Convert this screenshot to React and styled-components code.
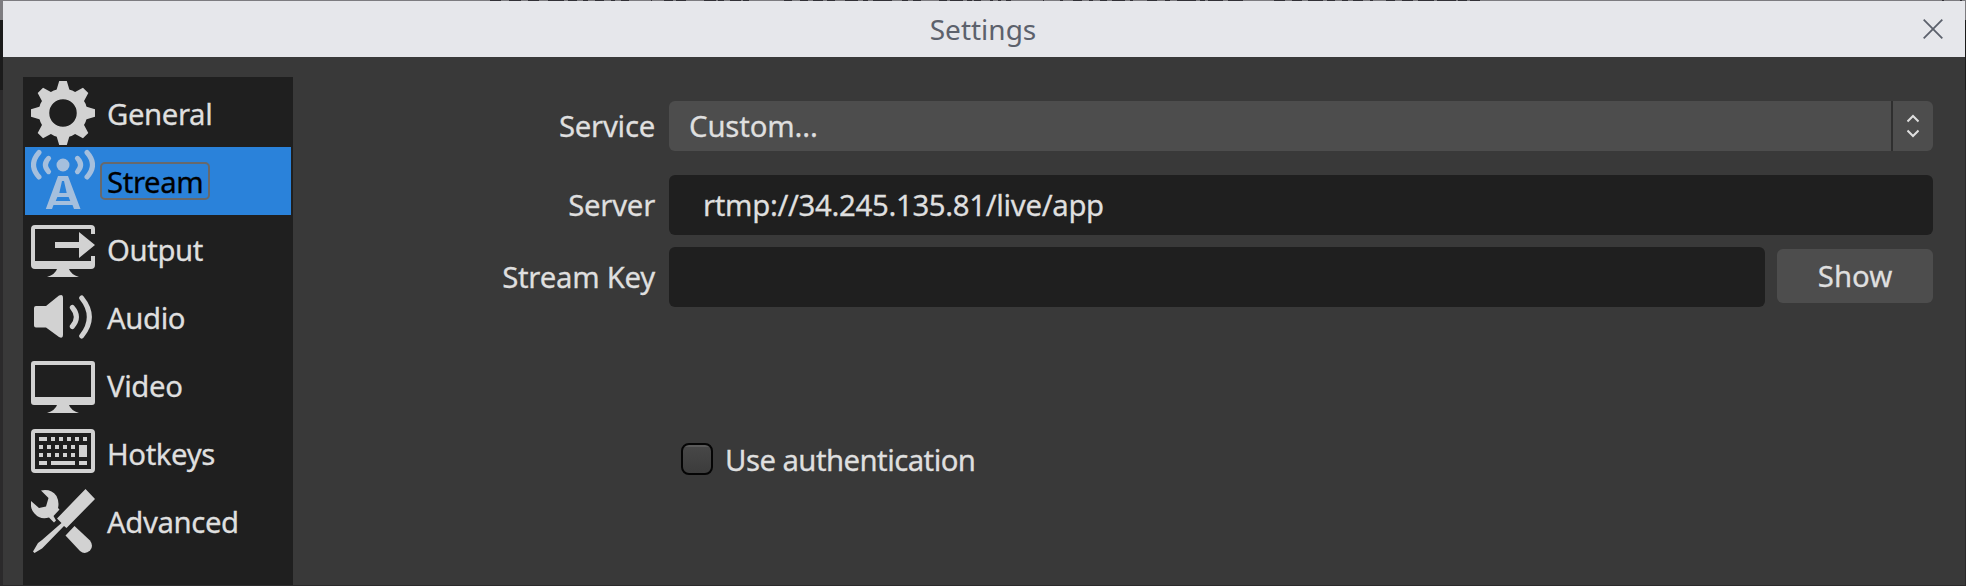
import React from "react";
import styled, { createGlobalStyle } from "styled-components";

const Global = createGlobalStyle`
  * { box-sizing: border-box; }
  body { margin: 0; background: #2b2b2c; overflow: hidden; }
`;

// Start and end of each dark run of the window text that shows above the dialog.
const runs = [
  [490, 501], [509, 521], [528, 539], [548, 564], [568, 577], [583, 588], [595, 604],
  [611, 615], [621, 629], [651, 652], [664, 673], [676, 686], [704, 716], [718, 724],
  [730, 741], [743, 749], [784, 792], [800, 808], [813, 823], [827, 835], [845, 858],
  [863, 868], [873, 892], [902, 908], [913, 921], [939, 947], [950, 963], [967, 972],
  [974, 981], [990, 993], [998, 1001], [1006, 1011], [1043, 1044], [1060, 1063],
  [1073, 1082], [1089, 1093], [1100, 1107], [1112, 1125], [1130, 1133], [1147, 1157],
  [1165, 1170], [1177, 1196], [1200, 1205], [1208, 1223], [1228, 1243], [1274, 1285],
  [1292, 1302], [1308, 1323], [1327, 1335], [1342, 1348], [1353, 1363], [1370, 1373],
  [1386, 1395], [1402, 1413], [1418, 1434], [1437, 1456], [1458, 1467], [1470, 1480],
  [1942, 1944], [1960, 1962],
];
const runStops = runs
  .map(([a, b]) => `#7d7c80 ${a}px, #313036 ${a}px, #313036 ${b}px, #7d7c80 ${b}px`)
  .join(", ");

const Desktop = styled.div`
  width: 1966px;
  height: 586px;
  padding: 1px 1px 1px 3px;
  background:
    linear-gradient(90deg, ${runStops}) 0 0 / 100% 1px no-repeat,
    linear-gradient(#7d7c80, #7d7c80) 0 1px / 100% 19px no-repeat,
    linear-gradient(#1b1b1b, #1b1b1b) 0 20px / 100% 70px no-repeat,
    #2b2a2b;
  font: 29.33px/40px "Noto Sans", sans-serif;
  letter-spacing: -0.15px;
  -webkit-text-stroke: 0.3px currentColor;
  color: #dfdfdf;
`;

const Dialog = styled.div`
  height: 584px;
  display: flex;
  flex-direction: column;
  background: #393939;
`;

const TitleBar = styled.header`
  height: 56px;
  flex: none;
  display: grid;
  grid-template-columns: 62px 1fr 64px;
  align-items: center;
  background: #e6e7eb;
  color: #5c616c;
`;

const Title = styled.h1`
  grid-column: 2;
  margin: 0;
  font-size: 28px;
  font-weight: 400;
  line-height: 40px;
  letter-spacing: 0;
  text-align: center;
  -webkit-text-stroke: 0;
`;

const CloseButton = styled.button`
  border: 0;
  padding: 0;
  background: none;
  display: flex;
  justify-content: center;
`;

const Body = styled.div`
  flex: 1;
  min-height: 0;
  display: flex;
  padding: 20px 32px 0 20px;
`;

const Sidebar = styled.nav`
  width: 270px;
  padding: 2px;
  background: #1f1f1f;
`;

const NavItem = styled.div`
  height: 68px;
  padding-left: 6px;
  display: flex;
  align-items: center;
  gap: 5px;
  background: ${(p) => (p.$active ? "#2a82da" : "transparent")};
  color: ${(p) => (p.$active ? "#000" : "#dfdfdf")};
  & > svg { color: ${(p) => (p.$active ? "#a5bfdd" : "#d2d2d2")}; flex: none; }
`;

const NavLabel = styled.span`
  height: 38px;
  padding: 1px 5px 0;
  border: 2px solid ${(p) => (p.$active ? "#67696c" : "transparent")};
  border-radius: 5px;
  line-height: 34px;
  letter-spacing: -0.4px;
`;

const Form = styled.form`
  flex: 1;
  display: grid;
  grid-template-columns: 363px 1264px;
  grid-template-rows: 50px 24px 60px 12px 60px 136px 32px;
  column-gap: 13px;
  align-items: center;
  padding-top: 24px;
  align-content: start;
`;

const Label = styled.label`
  grid-column: 1;
  grid-row: ${(p) => p.$row};
  padding-right: 1px;
  text-align: right;
  letter-spacing: -0.25px;
`;

const Field = styled.div`
  grid-column: 2;
  grid-row: ${(p) => p.$row};
  display: flex;
  align-items: center;
  gap: 12px;
`;

const Select = styled.div`
  flex: 1;
  height: 50px;
  display: flex;
  border-radius: 6px;
  background: #4d4d4d;
`;

const SelectValue = styled.span`
  flex: 1;
  padding: 5px 0 0 20px;
`;

const SelectArrows = styled.span`
  width: 42px;
  border-left: 2px solid #2f2f2f;
  display: flex;
  align-items: center;
  justify-content: center;
`;

const Input = styled.input`
  flex: 1;
  min-width: 0;
  height: 60px;
  border: 0;
  border-radius: 6px;
  padding: 0 33px 1px 34px;
  background: #1f1f1f;
  color: #dfdfdf;
  font: inherit;
  letter-spacing: -0.32px;
  outline: none;
`;

const Button = styled.button`
  width: 156px;
  height: 54px;
  margin-bottom: 2px;
  border: 0;
  border-radius: 6px;
  padding: 0;
  background: #4d4d4d;
  color: #dfdfdf;
  font: inherit;
`;

const Check = styled.label`
  grid-column: 2;
  grid-row: 7;
  display: flex;
  align-items: center;
  gap: 12px;
  padding-left: 12px;
  letter-spacing: -0.55px;
`;

const CheckText = styled.span`
  padding-top: 2px;
`;

const Box = styled.span`
  width: 32px;
  height: 32px;
  border: 2px solid #050505;
  border-radius: 8px;
  background: linear-gradient(#5a5a5a 0 2px, #474747 2px, #3c3c3c);
`;

const Icon = ({ children }) => (
  <svg width="64" height="64" viewBox="0 0 64 64" fill="currentColor">{children}</svg>
);

const teeth = [0, 45, 90, 135, 180, 225, 270, 315];
const GearIcon = () => (
  <Icon>
    <circle cx="32" cy="32" r="19" fill="none" stroke="currentColor" strokeWidth="10.5" />
    {teeth.map((a) => (
      <path key={a} d="M28.2 0H35.8L38.8 10L43 14H21L25.2 10Z" transform={`rotate(${a} 32 32)`} />
    ))}
  </Icon>
);

const StreamIcon = () => (
  <Icon>
    <circle cx="32" cy="16" r="6.5" />
    <g fill="none" stroke="currentColor" strokeWidth="5" strokeLinecap="round">
      <path d="M17.6 9.3Q11.2 16 17.6 22.7M46.4 9.3Q52.8 16 46.4 22.7" />
      <path d="M8 3.5Q-3 16 8 28M56 3.5Q67 16 56 28" />
    </g>
    <path fillRule="evenodd" d="M27 27H37L49.5 60H43L41.5 56H22.5L21 60H14.8ZM31 32L28.3 44H35.7L33 32ZM26.4 48L24.7 52H39.3L37.6 48Z" />
  </Icon>
);

const Stand = () => <path d="M26 52H38Q39.5 57 48 60H16Q24.5 57 26 52Z" />;

const OutputIcon = () => (
  <Icon>
    <path d="M4 8H60Q64 8 64 12V17H60V12H4V44H60V39H64V48Q64 52 60 52H4Q0 52 0 48V12Q0 8 4 8Z" />
    <path d="M24 25H48V15L64 28L48 41V31H24Z" />
    <Stand />
  </Icon>
);

const VideoIcon = () => (
  <Icon>
    <path fillRule="evenodd" d="M3 8H61Q64 8 64 11V49Q64 52 61 52H3Q0 52 0 49V11Q0 8 3 8ZM4 12V44H60V12Z" />
    <Stand />
  </Icon>
);

const AudioIcon = () => (
  <Icon>
    <path d="M5 21H15L28 10.5Q32 8.5 32 13V50Q32 54 28 52L15 42.5H5Q3 42.5 3 40.5V23Q3 21 5 21Z" />
    <g fill="none" stroke="currentColor" strokeWidth="5" strokeLinecap="round">
      <path d="M41.3 22.5Q49.5 32 41.3 41.5M50.7 13Q66 32 50.7 51" />
    </g>
  </Icon>
);

const KeyboardIcon = () => (
  <Icon>
    <rect x="2" y="10" width="60" height="40" rx="2" fill="none" stroke="currentColor" strokeWidth="4" />
    <path d="M8 16h8v4h-8zM20 16h4v4h-4zM28 16h4v4h-4zM36 16h4v4h-4zM44 16h4v4h-4zM52 16h4v4h-4z" />
    <path d="M8 24h4v4h-4zM16 24h4v4h-4zM24 24h4v4h-4zM32 24h4v4h-4zM40 24h4v4h-4zM48 24h8v12h-8z" />
    <path d="M8 32h4v4h-4zM16 32h4v4h-4zM24 32h4v4h-4zM32 32h4v4h-4zM40 32h4v4h-4z" />
    <path d="M8 40h8v4h-8zM20 40h24v4h-24zM48 40h8v4h-8z" />
  </Icon>
);

const ToolsIcon = () => (
  <Icon>
    <path d="M54.5 0L64 10L35.5 39L33 37L14 56.5L11 59.5L3.5 64L2 62.5L7 54L11 51L30.5 34L26 29.5Z" />
    <path d="M10 1.5Q20 -.5 25.5 7Q28.5 13 27 19L28.5 20.5L22.5 27L25 31.5L23 33.5L18 28.5Q9 31 3.5 24.5Q-1 20 0 12L8 19L15 17.5L17.5 9Z" />
    <path d="M43.5 37L59 51.5Q63 57 59 61.5Q54 66 49 62L34.5 46.5Z" />
  </Icon>
);

const items = [
  ["General", GearIcon],
  ["Stream", StreamIcon],
  ["Output", OutputIcon],
  ["Audio", AudioIcon],
  ["Video", VideoIcon],
  ["Hotkeys", KeyboardIcon],
  ["Advanced", ToolsIcon],
];

export default function App() {
  return (
    <Desktop>
      <Global />
      <Dialog>
        <TitleBar>
          <Title>Settings</Title>
          <CloseButton aria-label="Close">
            <svg width="20" height="20" viewBox="0 0 20 20" stroke="#5c616c" strokeWidth="1.8">
              <path d="M.7.7L19.3 19.3M19.3.7L.7 19.3" />
            </svg>
          </CloseButton>
        </TitleBar>
        <Body>
          <Sidebar>
            {items.map(([name, Glyph]) => (
              <NavItem key={name} $active={name === "Stream"}>
                <Glyph />
                <NavLabel $active={name === "Stream"}>{name}</NavLabel>
              </NavItem>
            ))}
          </Sidebar>
          <Form>
            <Label $row={1}>Service</Label>
            <Field $row={1}>
              <Select>
                <SelectValue>Custom...</SelectValue>
                <SelectArrows>
                  <svg width="12" height="24" viewBox="0 0 12 24" fill="none" stroke="#dfdfdf" strokeWidth="2">
                    <path d="M.5 7.5L6 2L11.5 7.5M.5 16.5L6 22L11.5 16.5" />
                  </svg>
                </SelectArrows>
              </Select>
            </Field>
            <Label $row={3}>Server</Label>
            <Field $row={3}>
              <Input defaultValue="rtmp://34.245.135.81/live/app" />
            </Field>
            <Label $row={5}>Stream Key</Label>
            <Field $row={5}>
              <Input />
              <Button type="button">Show</Button>
            </Field>
            <Check>
              <Box />
              <CheckText>Use authentication</CheckText>
            </Check>
          </Form>
        </Body>
      </Dialog>
    </Desktop>
  );
}
